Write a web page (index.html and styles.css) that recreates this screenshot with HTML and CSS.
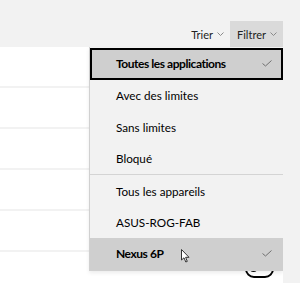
FILE: index.html
```html
<!DOCTYPE html>
<html lang="fr">
  <head>
    <meta charset="UTF-8" />
    <meta name="viewport" content="width=device-width, initial-scale=1.0" />
    <title>Filtrer</title>
    <link rel="stylesheet" href="styles.css">
  </head>
  <body>
    <div class="page">
      <div class="toolbar">
        <button class="tool">Trier
          <svg class="chev" width="7" height="4" viewBox="0 0 7 4"><polyline points="0.5,0.5 3.5,3.5 6.5,0.5" /></svg>
        </button>
        <button class="tool open">Filtrer
          <svg class="chev" width="7" height="4" viewBox="0 0 7 4"><polyline points="0.5,0.5 3.5,3.5 6.5,0.5" /></svg>
        </button>
      </div>

      <div class="rows">
        <div class="row"></div>
        <div class="row"></div>
        <div class="row"></div>
        <div class="row"></div>
        <div class="row"></div>
        <div class="row last">
          <span class="toggle"><span class="knob"></span></span>
        </div>
      </div>

      <div class="menu">
        <div class="item selected focus">
          <span>Toutes les applications</span>
          <svg class="check" width="10" height="7" viewBox="0 0 10 7"><polyline points="0.5,3.5 3.5,6 9.5,0.5" /></svg>
        </div>
        <div class="item"><span>Avec des limites</span></div>
        <div class="item"><span>Sans limites</span></div>
        <div class="item"><span>Bloqué</span></div>
        <div class="sep"></div>
        <div class="item"><span>Tous les appareils</span></div>
        <div class="item"><span>ASUS-ROG-FAB</span></div>
        <div class="item selected">
          <span>Nexus 6P</span>
          <svg class="check" width="10" height="7" viewBox="0 0 10 7"><polyline points="0.5,3.5 3.5,6 9.5,0.5" /></svg>
        </div>
      </div>

      <svg class="cursor" width="9" height="14" viewBox="0 0 9 14">
        <path d="M0.5 0.5 L0.5 11 L3 8.8 L4.8 13 L6.3 12.4 L4.6 8.3 L8 8.3 Z" />
      </svg>
    </div>
  </body>
</html>
```

FILE: styles.css
```css
body {
  margin: 0;
  background-color: #f2f2f2;
  font-family: Lato, "Noto Sans", sans-serif;
  font-size: 12px;
  color: #000;
}

.page {
  position: relative;
  width: 283px;
  height: 283px;
  overflow: hidden;
}

.toolbar {
  display: flex;
  justify-content: flex-end;
  padding-top: 21px;
  height: 26px;
}

.tool {
  display: flex;
  align-items: center;
  gap: 4px;
  height: 26px;
  padding: 0 6px 0 7px;
  border: none;
  background: none;
  font-family: inherit;
  font-size: 11px;
  color: #222;
}

.tool.open {
  background-color: #dadada;
}

.chev polyline {
  fill: none;
  stroke: #8a8a8a;
  stroke-width: 1;
}

.rows {
  display: flex;
  flex-direction: column;
  gap: 2px;
}

.row {
  height: 39px;
  background-color: #fff;
}

.row.last {
  display: flex;
  justify-content: flex-end;
  padding: 7px 9px 0 0;
  height: 32px;
}

.toggle {
  position: relative;
  width: 25px;
  height: 15px;
  border: 2px solid #000;
  border-radius: 9px;
}

.knob {
  position: absolute;
  left: 3px;
  top: 4px;
  width: 7px;
  height: 7px;
  border-radius: 50%;
  background-color: #000;
}

.menu {
  position: absolute;
  left: 89px;
  top: 47px;
  width: 194px;
  background-color: #f2f2f2;
  border: 1px solid #d0d0d0;
  border-right: none;
  border-top: none;
  box-sizing: border-box;
  box-shadow: 0 2px 4px rgba(0, 0, 0, 0.08);
}

.item {
  display: flex;
  align-items: center;
  justify-content: space-between;
  height: 31.5px;
  padding: 0 11px 0 26px;
  box-sizing: border-box;
  font-size: 11.7px;
}

.item.selected {
  background-color: #cfcfcf;
  font-size: 12px;
  font-weight: bold;
  letter-spacing: -0.45px;
}

.item.focus {
  margin-top: 1px;
  border: 2px solid #000;
  padding: 0 9px 0 24px;
  height: 31.5px;
}

.check polyline {
  fill: none;
  stroke: #707070;
  stroke-width: 1;
}

.sep {
  height: 1px;
  background-color: #d4d4d4;
}

.cursor {
  position: absolute;
  left: 181px;
  top: 249px;
}

.cursor path {
  fill: #fff;
  stroke: #333;
  stroke-width: 1;
  stroke-linejoin: round;
}
```
